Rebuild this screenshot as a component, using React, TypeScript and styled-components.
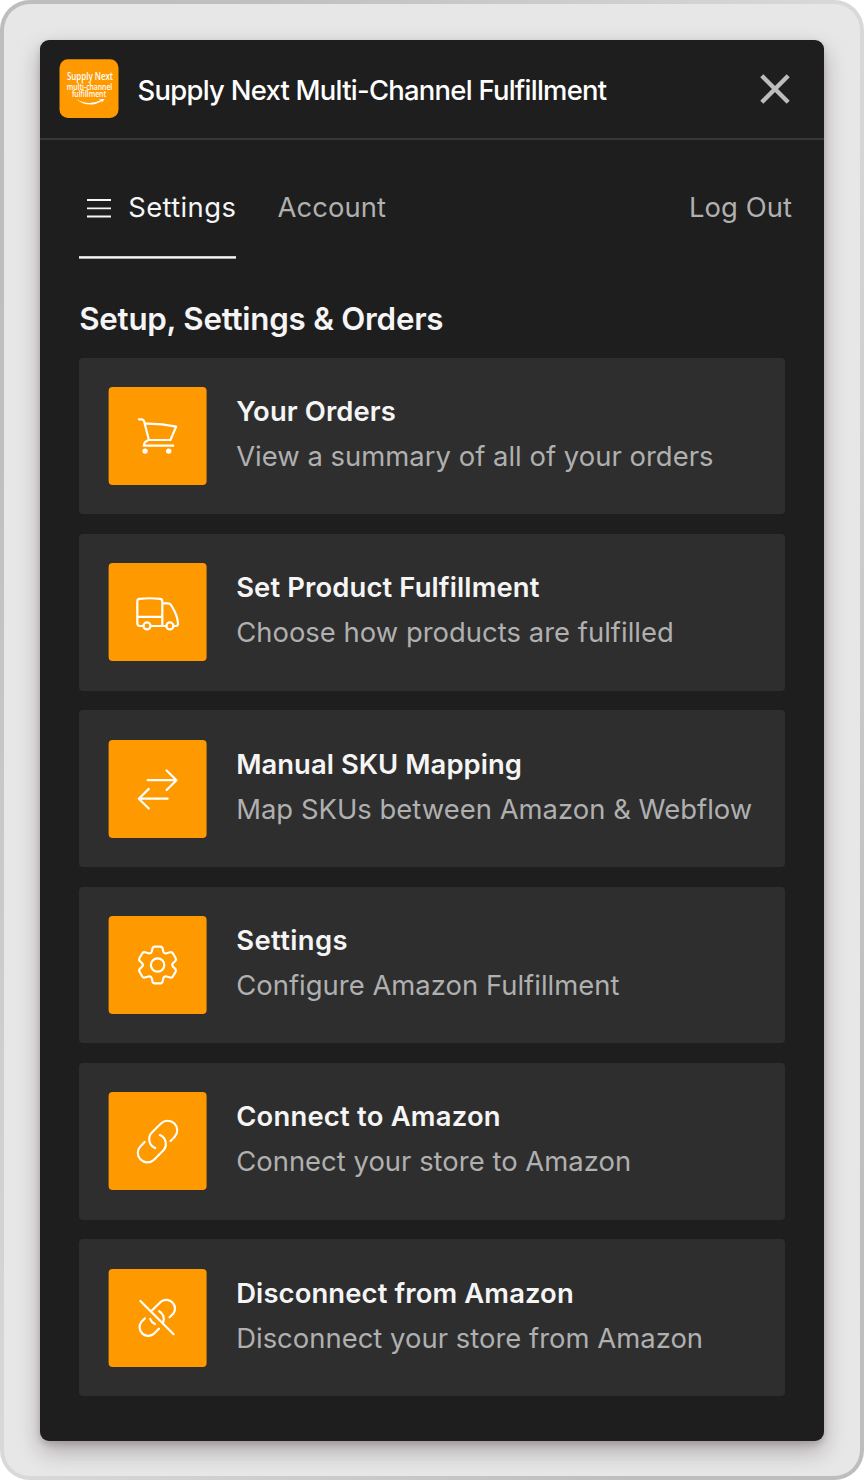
import React from "react";
import styled, { createGlobalStyle } from "styled-components";

const GlobalStyle = createGlobalStyle`
  * { box-sizing: border-box; }
  body {
    margin: 0;
    background: #fff;
    font-family: Inter, "Liberation Sans", sans-serif;
  }
`;

const Frame = styled.div`
  width: 864px;
  height: 1480px;
  padding: 36px;
  border: 4px solid transparent;
  border-radius: 30px;
  background:
    linear-gradient(#e7e7e7, #e7e7e7) padding-box,
    linear-gradient(120deg, #bdbdbd 0%, #bfbfbf 15%, #d9d9d9 50%, #bfbfbf 85%, #bdbdbd 100%) border-box;
`;

const Panel = styled.main`
  width: 784px;
  height: 1401px;
  border-radius: 9px;
  background: #1e1e1e;
  box-shadow: 0 10px 22px rgba(40, 20, 30, 0.3), 0 3px 6px rgba(40, 20, 30, 0.16);
`;

const Header = styled.header`
  display: flex;
  align-items: center;
  height: 100px;
  padding: 0 33px 2px 19px;
  border-bottom: 2px solid #383838;
`;

const Logo = styled.svg`
  width: 60px;
  height: 60px;
  flex: none;
`;

const AppTitle = styled.h1`
  margin: 4px auto 0 18.6px;
  font-size: 27.4px;
  font-weight: 500;
  line-height: 36px;
  letter-spacing: -0.73px;
  color: #fff;
  white-space: nowrap;
`;

const CloseButton = styled.button`
  display: flex;
  padding: 2px 0 0;
  border: 0;
  background: none;
`;

const Tabs = styled.nav`
  display: flex;
  height: 119px;
  padding: 0 32px 0 39.2px;
`;

const Tab = styled.a<{ $active?: boolean; $push?: boolean }>`
  display: flex;
  align-items: center;
  gap: 17px;
  height: 119px;
  margin-left: ${(p) => (p.$push ? "auto" : "0")};
  margin-right: ${(p) => (p.$active ? "41.2px" : "0")};
  padding: 15px 0 0 ${(p) => (p.$active ? "8px" : "0")};
  box-shadow: ${(p) =>
    p.$active ? "inset 0 -1px #a8a8a8, inset 0 -2px #f5f5f5, inset 0 -3px #d0d0d0" : "none"};
  font-size: 27.4px;
  font-weight: 400;
  letter-spacing: ${(p) => (p.$active ? "0.4px" : "0.08px")};
  color: ${(p) => (p.$active ? "#f5f5f5" : "#b0b0b0")};
  white-space: nowrap;
`;

const MenuIcon = styled.svg`
  width: 24px;
  height: 20px;
  margin-top: 1px;
  stroke: #f5f5f5;
  stroke-width: 1.8;
`;

const Heading = styled.h2`
  margin: 40.5px 39.2px 19px;
  font-size: 31.3px;
  font-weight: 600;
  line-height: 39px;
  letter-spacing: -0.24px;
  color: #f5f5f5;
`;

const CardList = styled.div`
  display: flex;
  flex-direction: column;
  gap: 19.6px;
  padding: 0 39.2px;
`;

const Card = styled.a`
  display: flex;
  align-items: center;
  gap: 29.2px;
  height: 156.8px;
  padding: 0 28.8px;
  border-radius: 4px;
  background: #2e2e2e;
`;

const Tile = styled.svg`
  width: 99px;
  height: 98px;
  flex: none;
  fill: none;
  stroke: #fff;
  stroke-width: 2.2;
  stroke-linecap: round;
  stroke-linejoin: round;
`;

const CardTitle = styled.h3<{ $tracking: number }>`
  margin: 0 0 9px;
  font-size: 27.4px;
  font-weight: 600;
  line-height: 36px;
  letter-spacing: ${(p) => p.$tracking}px;
  color: #f5f5f5;
  white-space: nowrap;
`;

const CardText = styled.p`
  margin: 0 0 5px;
  font-size: 27.4px;
  font-weight: 400;
  line-height: 36px;
  letter-spacing: 0.03px;
  color: #b0b0b0;
  white-space: nowrap;
`;

const CartIcon = () => (
  <>
    <path d="M30.3 32.3h2.8q1.800 0 2.400 1.900L40.300 53" />
    <path d="M36.600 36.600Q52.500 36.300 67.600 39.600L61.800 53H40.300Q35.400 54.500 35.200 58.700H64.600" />
    <circle cx="36.500" cy="64.100" r="2.700" fill="#fff" stroke="none" />
    <circle cx="60.100" cy="64.100" r="2.700" fill="#fff" stroke="none" />
  </>
);

const TruckIcon = () => (
  <>
    <path d="M34.700 63H31.300Q28.700 63 28.700 60.300V38.200Q28.700 36.200 31 35.900Q41 34.600 51.500 35.900Q53.700 36.200 53.700 38.200V63H42M28.700 53.800H53.700M53.700 40.300H59.200Q61.200 40.300 62.400 42Q69.200 52.500 69.400 60.500Q69.400 63 67.400 63H65.200M53.700 63H57.500" />
    <circle cx="38.400" cy="62.900" r="3.500" />
    <circle cx="61.300" cy="62.900" r="3.500" />
  </>
);

const SwapIcon = () => (
  <path d="M39.100 40.200H67.500M58 30.500 67.900 40.200 58 50M59 58.700H30.400M40.200 48.900 30.200 58.700 40.200 68.500" />
);

const GearIcon = () => (
  <>
    <path d="M46.200 30.600H51.700Q53.600 30.600 54 32.500L54.700 35.500Q55.200 37.300 57 37.500L61.600 36.200Q63.300 35.800 64.200 37.300L67 42Q68 43.600 66.700 45L64.300 47.200Q62.900 48.900 64.300 50.600L66.700 52.800Q68 54.200 67 55.800L64.200 60.500Q63.300 62 61.600 61.500L57 60.300Q55.200 60.500 54.700 62.300L54 65.500Q53.600 67.400 51.700 67.400H46.200Q44.300 67.400 43.900 65.500L43.200 62.300Q42.700 60.500 40.900 60.300L36.300 61.500Q34.600 62 33.700 60.500L30.900 55.800Q29.900 54.200 31.200 52.800L33.600 50.600Q35 48.900 33.600 47.200L31.200 45Q29.900 43.600 30.900 42L33.700 37.300Q34.600 35.800 36.300 36.200L40.900 37.500Q42.700 37.300 43.200 35.500L43.900 32.500Q44.300 30.600 46.200 30.600Z" />
    <circle cx="49" cy="49" r="6.700" />
  </>
);

const LinkIcon = () => (
  <path
    transform="translate(1.500 1.800) scale(0.966)"
    d="M62.600 48.800 66.700 44.700A9.900 9.900 0 0 0 52.700 30.700L43.500 39.900A9.900 9.900 0 0 0 46.700 56.200M35.800 49.900 31.500 54.200A9.900 9.900 0 0 0 45.500 68.200L54.700 59A9.900 9.900 0 0 0 51.500 42.700"
  />
);

const UnlinkIcon = () => (
  <path
    transform="translate(-0.700 -0.500)"
    d="M32.500 32.500 65.700 65.700M44 42 53.500 32.800A8.700 8.700 0 0 1 65.500 45L61.700 48.700M51.300 42.700A8.600 8.600 0 0 1 55.300 53.500M42.300 50.500Q43.500 54 47 55.500M36.900 49.900 33.300 53.600A8.700 8.700 0 0 0 45.500 65.700L51 60.200"
  />
);

const items = [
  { title: "Your Orders", tracking: 0.1, text: "View a summary of all of your orders", Icon: CartIcon },
  { title: "Set Product Fulfillment", tracking: 0.13, text: "Choose how products are fulfilled", Icon: TruckIcon },
  { title: "Manual SKU Mapping", tracking: 0.06, text: "Map SKUs between Amazon & Webflow", Icon: SwapIcon },
  { title: "Settings", tracking: 0.4, text: "Configure Amazon Fulfillment", Icon: GearIcon },
  { title: "Connect to Amazon", tracking: 0.22, text: "Connect your store to Amazon", Icon: LinkIcon },
  { title: "Disconnect from Amazon", tracking: 0.13, text: "Disconnect your store from Amazon", Icon: UnlinkIcon },
];

export default function App() {
  return (
    <>
      <GlobalStyle />
      <Frame>
        <Panel>
          <Header>
            <Logo viewBox="-0.500 -1.200 60 60">
              <rect width="59" height="58.800" rx="8.500" fill="#ff9900" />
              <g fill="#fff" fontFamily="'Open Sans', sans-serif" fontWeight="600">
                <text transform="translate(7.400 20.700) scale(0.780 1)" fontSize="10.200">Supply Next</text>
                <text transform="translate(7.200 30.400) scale(0.820 1)" fontSize="8.300">multi-channel</text>
                <text transform="translate(12.400 37.700) scale(0.820 1)" fontSize="8.300">fulfillment</text>
              </g>
              <path d="M16.500 39.700Q29 50 42.500 41.700L42 43.700L45.300 39.500L39.500 40.300L41 41Q29 47.200 16.500 39.700Z" fill="#fff" />
            </Logo>
            <AppTitle>Supply Next Multi-Channel Fulfillment</AppTitle>
            <CloseButton aria-label="Close">
              <svg width="32" height="32" viewBox="0 0 32 32" fill="none" stroke="#bdbdbd" strokeWidth="4.400">
                <path d="M2.800 2.800 29.200 29.200M29.200 2.800 2.800 29.200" />
              </svg>
            </CloseButton>
          </Header>
          <Tabs>
            <Tab $active>
              <MenuIcon viewBox="0 0 24 20">
                <path d="M0 2H24M0 10.300H24M0 18.500H24" />
              </MenuIcon>
              Settings
            </Tab>
            <Tab>Account</Tab>
            <Tab $push>Log Out</Tab>
          </Tabs>
          <Heading>Setup, Settings &amp; Orders</Heading>
          <CardList>
            {items.map(({ title, tracking, text, Icon }) => (
              <Card key={title}>
                <Tile viewBox="-0.600 0 99 98">
                  <rect width="98" height="98" rx="4" fill="#ff9900" stroke="none" />
                  <Icon />
                </Tile>
                <div>
                  <CardTitle $tracking={tracking}>{title}</CardTitle>
                  <CardText>{text}</CardText>
                </div>
              </Card>
            ))}
          </CardList>
        </Panel>
      </Frame>
    </>
  );
}
